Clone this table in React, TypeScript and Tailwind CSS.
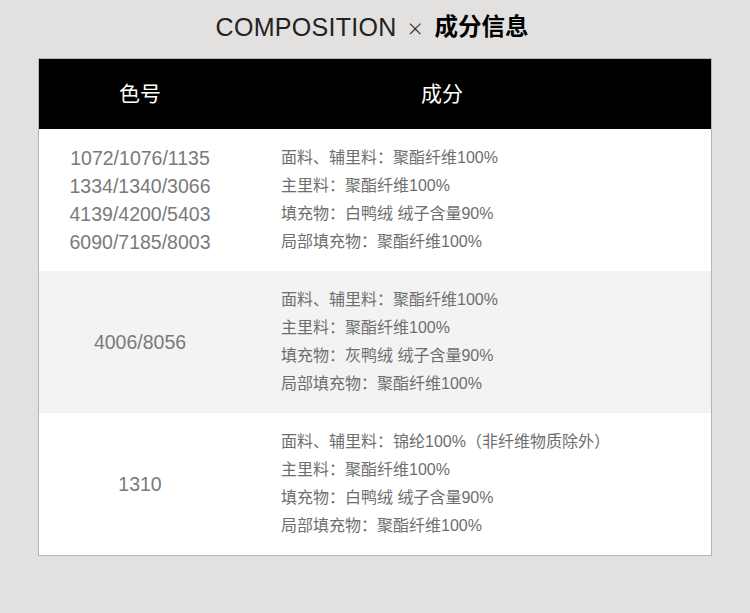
const rows = [
  {
    codes: ['1072/1076/1135', '1334/1340/3066', '4139/4200/5403', '6090/7185/8003'],
    items: ['面料、辅里料：聚酯纤维100%', '主里料：聚酯纤维100%', '填充物：白鸭绒 绒子含量90%', '局部填充物：聚酯纤维100%'],
    bg: 'bg-white'
  },
  {
    codes: ['4006/8056'],
    items: ['面料、辅里料：聚酯纤维100%', '主里料：聚酯纤维100%', '填充物：灰鸭绒 绒子含量90%', '局部填充物：聚酯纤维100%'],
    bg: 'bg-[#f3f3f3]'
  },
  {
    codes: ['1310'],
    items: ['面料、辅里料：锦纶100%（非纤维物质除外）', '主里料：聚酯纤维100%', '填充物：白鸭绒 绒子含量90%', '局部填充物：聚酯纤维100%'],
    bg: 'bg-white'
  }
]

const App = () => {
  return (
    <div className="w-[750px] h-[613px] bg-[#e2e1df] font-['Liberation_Sans','Noto_Sans_CJK_SC',sans-serif]">
      <div className="h-[58px] flex items-center justify-center pb-[2px] pr-[6px]">
        <span className="text-[25px] text-[#222] tracking-[0.3px]">COMPOSITION</span>
        <span className="text-[26px] text-[#333] ml-[11px] mr-[12px] font-['Open_Sans',sans-serif] font-light">×</span>
        <span className="text-[23.5px] font-bold text-black">成分信息</span>
      </div>
      <div className="mx-[38px] border border-[#b5b5b5] bg-white">
        <div className="flex h-[70px] bg-black text-white text-[21px] items-center">
          <div className="w-[202px] text-center">色号</div>
          <div className="w-[402px] text-center">成分</div>
        </div>
        {rows.map((row, i) => (
          <div key={i} className={`flex h-[142px] items-center ${row.bg}`}>
            <div className="w-[202px] text-center text-[19.5px] leading-[28px] text-[#7a7a7a]">
              {row.codes.map((c) => (
                <div key={c}>{c}</div>
              ))}
            </div>
            <div className="pl-[40px] text-[16px] leading-[28px] text-[#6e6e6e]">
              {row.items.map((t) => (
                <div key={t}>{t}</div>
              ))}
            </div>
          </div>
        ))}
      </div>
    </div>
  )
}

export default App
